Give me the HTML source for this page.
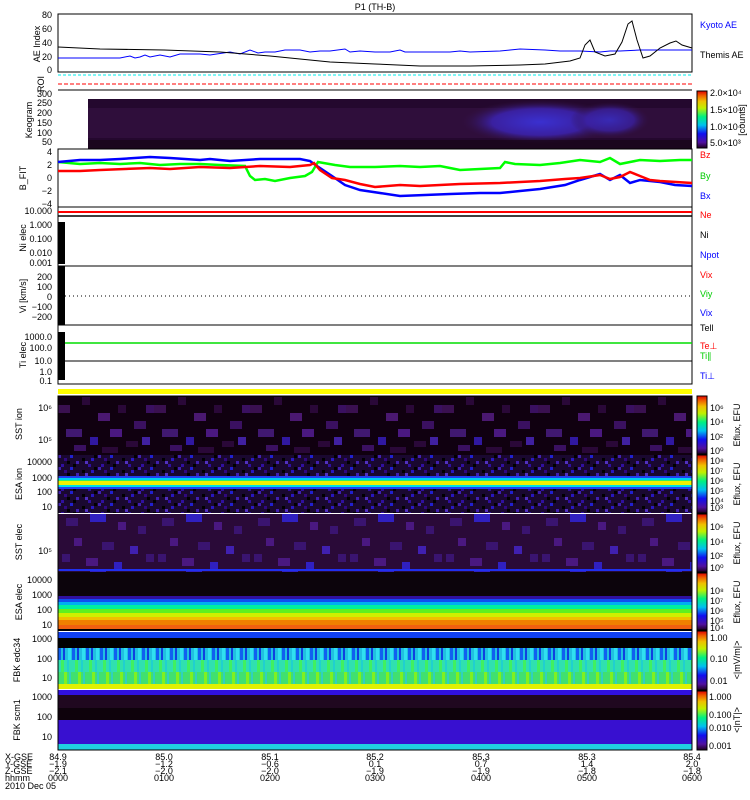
<!DOCTYPE html>
<html><head><meta charset="utf-8"><style>
html,body{margin:0;padding:0;background:#fff;width:750px;height:800px;overflow:hidden}
svg{display:block}
text{font-family:"Liberation Sans",sans-serif;font-size:9px}
</style></head><body>
<svg width="750" height="800" viewBox="0 0 750 800" xmlns="http://www.w3.org/2000/svg">
<defs>
<linearGradient id="cb" x1="0" y1="1" x2="0" y2="0">
<stop offset="0" stop-color="#200020"/><stop offset="0.1" stop-color="#5010a0"/><stop offset="0.25" stop-color="#1010f0"/><stop offset="0.4" stop-color="#00c0f0"/><stop offset="0.55" stop-color="#00f080"/><stop offset="0.7" stop-color="#c0f000"/><stop offset="0.82" stop-color="#f0c000"/><stop offset="0.92" stop-color="#f06000"/><stop offset="1" stop-color="#e00000"/>
</linearGradient>
<radialGradient id="kg" cx="0.5" cy="0.5" r="0.5">
<stop offset="0" stop-color="#3a30d0"/><stop offset="0.6" stop-color="#3a20a0"/><stop offset="1" stop-color="#32103e" stop-opacity="0"/>
</radialGradient>
<pattern id="sst1" width="96" height="58" patternUnits="userSpaceOnUse" x="58" y="397">
<rect width="96" height="58" fill="#100010"/>
<rect x="0" y="8" width="12" height="8" fill="#3a1050"/><rect x="24" y="0" width="8" height="8" fill="#2a0838"/><rect x="40" y="16" width="12" height="8" fill="#4a1870"/><rect x="60" y="8" width="8" height="8" fill="#2a0838"/><rect x="76" y="24" width="12" height="8" fill="#3a1060"/><rect x="8" y="32" width="16" height="8" fill="#401870"/><rect x="32" y="40" width="8" height="8" fill="#3018a0"/><rect x="52" y="32" width="12" height="8" fill="#4a1880"/><rect x="68" y="44" width="12" height="6" fill="#2a0838"/><rect x="84" y="40" width="8" height="8" fill="#4020a0"/><rect x="16" y="48" width="12" height="6" fill="#3a1060"/><rect x="44" y="50" width="16" height="6" fill="#2a0838"/><rect x="88" y="8" width="8" height="8" fill="#3a1060"/>
</pattern>
<pattern id="esan" width="40" height="12" patternUnits="userSpaceOnUse" x="58" y="455">
<rect width="40" height="12" fill="#1a0830"/>
<rect x="0" y="0" width="3" height="3" fill="#4020b0"/><rect x="6" y="3" width="3" height="3" fill="#300880"/><rect x="12" y="0" width="3" height="3" fill="#2020d0"/><rect x="18" y="6" width="3" height="3" fill="#4020b0"/><rect x="24" y="3" width="3" height="3" fill="#000"/><rect x="30" y="9" width="3" height="3" fill="#3010a0"/><rect x="36" y="0" width="3" height="3" fill="#000"/><rect x="3" y="9" width="3" height="3" fill="#3010a0"/><rect x="15" y="9" width="3" height="3" fill="#000"/><rect x="27" y="6" width="3" height="3" fill="#5030c0"/><rect x="9" y="6" width="3" height="3" fill="#000"/><rect x="33" y="3" width="3" height="3" fill="#2818c0"/>
</pattern>
<pattern id="sst2" width="96" height="56" patternUnits="userSpaceOnUse" x="58" y="514">
<rect width="96" height="56" fill="#2a0a38"/>
<rect x="8" y="4" width="12" height="8" fill="#3a1470"/><rect x="32" y="0" width="16" height="8" fill="#3020c0"/><rect x="60" y="8" width="8" height="8" fill="#4a1880"/><rect x="80" y="12" width="8" height="8" fill="#3a1470"/><rect x="16" y="24" width="8" height="8" fill="#4a1880"/><rect x="44" y="28" width="12" height="8" fill="#3a1470"/><rect x="72" y="32" width="8" height="8" fill="#4020b0"/><rect x="4" y="40" width="8" height="8" fill="#3a1470"/><rect x="28" y="44" width="12" height="8" fill="#4a1880"/><rect x="88" y="40" width="8" height="8" fill="#3a1470"/><rect x="56" y="48" width="8" height="8" fill="#3020c0"/>
</pattern>
<pattern id="fbk" width="14" height="60" patternUnits="userSpaceOnUse" x="58" y="630">
<rect width="14" height="60" fill="#20c0e0"/>
<rect x="0" y="18" width="3" height="12" fill="#1060f0"/><rect x="5" y="18" width="2" height="12" fill="#1040e0"/><rect x="10" y="18" width="3" height="12" fill="#30e0f0"/>
<rect x="0" y="30" width="14" height="12" fill="#30e0b0"/><rect x="3" y="30" width="3" height="12" fill="#40f060"/><rect x="9" y="30" width="2" height="12" fill="#20d0d0"/>
<rect x="0" y="42" width="14" height="13" fill="#40e070"/><rect x="6" y="42" width="3" height="13" fill="#80f020"/><rect x="11" y="42" width="2" height="13" fill="#30d0c0"/>
</pattern>
</defs>

<text x="375" y="10" text-anchor="middle" font-size="10">P1 (TH-B)</text>

<!-- AE panel -->
<rect x="58" y="14" width="634" height="58" fill="none" stroke="#000"/>
<polyline fill="none" stroke="#00f" points="58,58 80,58 100,58 120,58 130,56 135,58 140,57 145,55 150,57 160,55 170,57 180,54 200,54 210,55 230,52 240,54 250,50 258,53 265,52 275,52 285,50 300,50 310,52 320,51 330,51 345,49 350,52 360,51 375,52 390,52 400,50 405,52 430,52 450,52 460,51 470,52 500,51 510,50 520,49 545,50 560,51 580,51 600,52 610,51 620,51 640,50 660,50 692,50"/>
<polyline fill="none" stroke="#000" points="58,47 100,49 164,50 220,52 270,56 330,62 375,64 420,66 470,66 520,65 545,64 570,61 580,58 585,45 590,40 595,52 605,56 615,54 622,42 628,24 632,21 637,40 643,58 650,56 660,48 670,43 676,41 682,45 692,48"/>
<text x="52" y="18" text-anchor="end">80</text><text x="52" y="32" text-anchor="end">60</text><text x="52" y="46" text-anchor="end">40</text><text x="52" y="60" text-anchor="end">20</text><text x="52" y="73" text-anchor="end">0</text>
<text x="40" y="44" text-anchor="middle" transform="rotate(-90 40 44)">AE Index</text>
<text x="700" y="28" fill="#00f">Kyoto AE</text><text x="700" y="58">Themis AE</text>
<!-- ROI -->
<line x1="58" y1="75" x2="692" y2="75" stroke="#0ee" stroke-dasharray="3,2"/>
<line x1="58" y1="84" x2="692" y2="84" stroke="#f00" stroke-dasharray="4,2"/>
<text x="44" y="84" text-anchor="middle" transform="rotate(-90 44 84)">ROI</text>
<line x1="58" y1="90" x2="692" y2="90" stroke="#000"/>
<!-- keogram -->
<rect x="88" y="99" width="604" height="50" fill="#24082e"/>
<rect x="88" y="108" width="604" height="30" fill="#32103e" opacity="0.8"/>
<ellipse cx="540" cy="122" rx="80" ry="22" fill="url(#kg)"/>
<ellipse cx="610" cy="120" rx="40" ry="18" fill="url(#kg)" opacity="0.8"/>
<rect x="88" y="140" width="604" height="9" fill="#180618" opacity="0.7"/>
<text x="52" y="97" text-anchor="end">300</text><text x="52" y="106" text-anchor="end">250</text><text x="52" y="116" text-anchor="end">200</text><text x="52" y="126" text-anchor="end">150</text><text x="52" y="136" text-anchor="end">100</text><text x="52" y="145" text-anchor="end">50</text>
<text x="32" y="120" text-anchor="middle" transform="rotate(-90 32 120)">Keogram</text>
<rect x="697" y="91" width="10" height="57" fill="url(#cb)" stroke="#000"/>
<g font-size="8"><text x="710" y="96">2.0×10⁴</text><text x="710" y="113">1.5×10⁴</text><text x="710" y="130">1.0×10⁴</text><text x="710" y="146">5.0×10³</text></g>
<!-- B panel -->
<rect x="58" y="149" width="634" height="58" fill="none" stroke="#000"/>
<polyline fill="none" stroke="#0f0" stroke-width="2.5" points="58,162 80,164 100,163 120,164 140,163 160,165 180,164 200,164 220,165 245,166 250,176 255,180 265,179 275,181 290,178 305,176 312,172 318,162 335,165 350,167 375,167 400,166 420,167 440,166 450,168 460,170 480,169 500,168 505,162 515,164 540,165 560,163 580,160 600,162 610,158 620,164 640,160 660,161 680,160 692,160"/>
<polyline fill="none" stroke="#00f" stroke-width="2.5" points="58,162 80,160 100,160 120,159 150,157 170,158 200,160 210,159 230,161 260,159 300,159 310,161 314,164 320,168 332,176 345,185 360,190 380,193 400,196 450,194 480,193 500,193 520,191 540,189 565,185 580,180 600,174 610,180 620,175 630,183 640,180 660,182 675,185 692,186"/>
<polyline fill="none" stroke="#f00" stroke-width="2.5" points="58,171 80,171 100,170 150,168 170,169 200,167 230,168 260,166 290,167 310,165 314,163 320,170 332,178 345,180 360,184 375,187 400,185 420,186 460,184 500,183 520,182 540,181 565,179 580,178 600,175 610,179 620,177 630,172 640,176 650,180 660,181 692,183"/>
<text x="52" y="155" text-anchor="end">4</text><text x="52" y="168" text-anchor="end">2</text><text x="52" y="181" text-anchor="end">0</text><text x="52" y="194" text-anchor="end">−2</text><text x="52" y="207" text-anchor="end">−4</text>
<text x="26" y="178" text-anchor="middle" transform="rotate(-90 26 178)">B_FIT</text>
<text x="700" y="158" fill="#f00">Bz</text><text x="700" y="179" fill="#0c0">By</text><text x="700" y="199" fill="#00f">Bx</text>
<!-- density -->
<rect x="58" y="207" width="634" height="59" fill="none" stroke="#000"/>
<line x1="58" y1="212" x2="692" y2="212" stroke="#f00" stroke-width="2"/>
<line x1="58" y1="216" x2="692" y2="216" stroke="#000" stroke-width="1.5"/>
<rect x="58" y="222" width="7" height="42" fill="#000"/>
<text x="52" y="214" text-anchor="end">10.000</text><text x="52" y="228" text-anchor="end">1.000</text><text x="52" y="242" text-anchor="end">0.100</text><text x="52" y="256" text-anchor="end">0.010</text><text x="52" y="266" text-anchor="end">0.001</text>
<text x="26" y="238" text-anchor="middle" transform="rotate(-90 26 238)">Ni elec</text>
<text x="700" y="218" fill="#f00">Ne</text><text x="700" y="238">Ni</text><text x="700" y="258" fill="#00f">Npot</text>
<!-- V -->
<rect x="58" y="266" width="634" height="59" fill="none" stroke="#000"/>
<rect x="58" y="266" width="7" height="59" fill="#000"/>
<line x1="65" y1="296" x2="692" y2="296" stroke="#000" stroke-dasharray="1,3"/>
<text x="52" y="280" text-anchor="end">200</text><text x="52" y="290" text-anchor="end">100</text><text x="52" y="300" text-anchor="end">0</text><text x="52" y="310" text-anchor="end">−100</text><text x="52" y="320" text-anchor="end">−200</text>
<text x="26" y="296" text-anchor="middle" transform="rotate(-90 26 296)">Vi [km/s]</text>
<text x="700" y="278" fill="#f00">Vix</text><text x="700" y="297" fill="#0c0">Viy</text><text x="700" y="316" fill="#00f">Vix</text>
<!-- T -->
<rect x="58" y="325" width="634" height="59" fill="none" stroke="#000"/>
<line x1="58" y1="343" x2="692" y2="343" stroke="#0d0" stroke-width="1.5"/>
<line x1="58" y1="361" x2="692" y2="361" stroke="#000"/>
<rect x="58" y="332" width="7" height="48" fill="#000"/>
<text x="52" y="340" text-anchor="end">1000.0</text><text x="52" y="351" text-anchor="end">100.0</text><text x="52" y="364" text-anchor="end">10.0</text><text x="52" y="375" text-anchor="end">1.0</text><text x="52" y="384" text-anchor="end">0.1</text>
<text x="26" y="355" text-anchor="middle" transform="rotate(-90 26 355)">Ti elec</text>
<text x="700" y="331">Tell</text><text x="700" y="349" fill="#f00">Te⊥</text><text x="700" y="359" fill="#0c0">Ti∥</text><text x="700" y="379" fill="#00f">Ti⊥</text>
<!-- yellow bar -->
<rect x="58" y="389" width="634" height="5" fill="#ff0"/>
<!-- SST ion -->
<rect x="58" y="396" width="634" height="59" fill="url(#sst1)"/>
<!-- ESA ion -->
<rect x="58" y="455" width="634" height="58" fill="url(#esan)"/>
<rect x="58" y="476" width="634" height="2" fill="#2040f0"/>
<rect x="58" y="478" width="634" height="2" fill="#00d0f0"/>
<rect x="58" y="480" width="634" height="1" fill="#30f060"/>
<rect x="58" y="481" width="634" height="4" fill="#f0f000"/>
<rect x="58" y="485" width="634" height="2" fill="#00e0e0"/>
<rect x="58" y="487" width="634" height="2" fill="#2040f0"/>
<!-- SST elec -->
<rect x="58" y="514" width="634" height="58" fill="url(#sst2)"/>
<rect x="58" y="569" width="634" height="2" fill="#2030f0"/>
<!-- ESA elec -->
<rect x="58" y="572" width="634" height="58" fill="#0c040c"/>
<rect x="58" y="596" width="634" height="3" fill="#3010a0"/>
<rect x="58" y="599" width="634" height="3" fill="#1050f0"/>
<rect x="58" y="602" width="634" height="3" fill="#00b0f0"/>
<rect x="58" y="605" width="634" height="4" fill="#00f0a0"/>
<rect x="58" y="609" width="634" height="4" fill="#60f020"/>
<rect x="58" y="613" width="634" height="4" fill="#d0f000"/>
<rect x="58" y="617" width="634" height="3" fill="#f0c000"/>
<rect x="58" y="620" width="634" height="5" fill="#f08000"/>
<rect x="58" y="625" width="634" height="4" fill="#f06010"/>
<rect x="58" y="629" width="634" height="2" fill="#000"/>
<!-- FBK edc -->
<rect x="58" y="632" width="634" height="6" fill="#1040f0"/>
<rect x="58" y="638" width="634" height="10" fill="#000"/>
<rect x="58" y="648" width="634" height="37" fill="url(#fbk)"/>
<rect x="58" y="684" width="634" height="5" fill="#e0f000"/>
<!-- FBK scm -->
<rect x="58" y="690" width="634" height="5" fill="#3010e0"/>
<rect x="58" y="695" width="634" height="13" fill="#200820"/>
<rect x="58" y="708" width="634" height="12" fill="#0e020c"/>
<rect x="58" y="720" width="634" height="24" fill="#3810d0"/>
<rect x="58" y="744" width="634" height="6" fill="#20d0e0"/>
<rect x="58" y="396" width="634" height="354" fill="none" stroke="#000"/>
<!-- spectra labels -->
<text x="52" y="411" text-anchor="end">10⁶</text><text x="52" y="443" text-anchor="end">10⁵</text>
<text x="52" y="465" text-anchor="end">10000</text><text x="52" y="481" text-anchor="end">1000</text><text x="52" y="495" text-anchor="end">100</text><text x="52" y="510" text-anchor="end">10</text>
<text x="52" y="554" text-anchor="end">10⁵</text>
<text x="52" y="583" text-anchor="end">10000</text><text x="52" y="598" text-anchor="end">1000</text><text x="52" y="613" text-anchor="end">100</text><text x="52" y="628" text-anchor="end">10</text>
<text x="52" y="642" text-anchor="end">1000</text><text x="52" y="662" text-anchor="end">100</text><text x="52" y="681" text-anchor="end">10</text>
<text x="52" y="700" text-anchor="end">1000</text><text x="52" y="720" text-anchor="end">100</text><text x="52" y="740" text-anchor="end">10</text>
<text x="22" y="424" text-anchor="middle" transform="rotate(-90 22 424)">SST ion</text>
<text x="22" y="484" text-anchor="middle" transform="rotate(-90 22 484)">ESA ion</text>
<text x="22" y="542" text-anchor="middle" transform="rotate(-90 22 542)">SST elec</text>
<text x="22" y="602" text-anchor="middle" transform="rotate(-90 22 602)">ESA elec</text>
<text x="20" y="660" text-anchor="middle" transform="rotate(-90 20 660)">FBK edc34</text>
<text x="20" y="720" text-anchor="middle" transform="rotate(-90 20 720)">FBK scm1</text>
<!-- colorbars -->
<rect x="697" y="396" width="10" height="58" fill="url(#cb)" stroke="#000"/>
<rect x="697" y="455" width="10" height="58" fill="url(#cb)" stroke="#000"/>
<rect x="697" y="514" width="10" height="58" fill="url(#cb)" stroke="#000"/>
<rect x="697" y="573" width="10" height="57" fill="url(#cb)" stroke="#000"/>
<rect x="697" y="631" width="10" height="59" fill="url(#cb)" stroke="#000"/>
<rect x="697" y="691" width="10" height="59" fill="url(#cb)" stroke="#000"/>
<g font-size="8">
<text x="710" y="411">10⁶</text><text x="710" y="425">10⁴</text><text x="710" y="440">10²</text><text x="710" y="454">10⁰</text>
<text x="710" y="464">10⁸</text><text x="710" y="474">10⁷</text><text x="710" y="484">10⁶</text><text x="710" y="494">10⁵</text><text x="710" y="504">10⁴</text><text x="710" y="511">10³</text>
<text x="710" y="530">10⁶</text><text x="710" y="545">10⁴</text><text x="710" y="559">10²</text><text x="710" y="571">10⁰</text>
<text x="710" y="594">10⁸</text><text x="710" y="604">10⁷</text><text x="710" y="614">10⁶</text><text x="710" y="624">10⁵</text><text x="710" y="631">10⁴</text>
<text x="710" y="641">1.00</text><text x="710" y="662">0.10</text><text x="710" y="684">0.01</text>
<text x="709" y="700">1.000</text><text x="709" y="718">0.100</text><text x="709" y="731">0.010</text><text x="709" y="749">0.001</text>
</g>
<g font-size="8">
<text x="740" y="425" text-anchor="middle" transform="rotate(-90 740 425)">Eflux, EFU</text>
<text x="740" y="484" text-anchor="middle" transform="rotate(-90 740 484)">Eflux, EFU</text>
<text x="740" y="543" text-anchor="middle" transform="rotate(-90 740 543)">Eflux, EFU</text>
<text x="740" y="602" text-anchor="middle" transform="rotate(-90 740 602)">Eflux, EFU</text>
<text x="740" y="660" text-anchor="middle" transform="rotate(-90 740 660)">&lt;|mV/m|&gt;</text>
<text x="740" y="720" text-anchor="middle" transform="rotate(-90 740 720)">&lt;|nT|&gt;</text>
<text x="745" y="120" text-anchor="middle" transform="rotate(-90 745 120)">[counts]</text>
</g>
<!-- bottom labels -->
<g font-size="8">
<text x="5" y="760">X-GSE</text><text x="5" y="767">Y-GSE</text><text x="5" y="774">Z-GSE</text><text x="5" y="781">hhmm</text><text x="5" y="789">2010 Dec 05</text>
<g text-anchor="middle">
<text x="58" y="760">84.9</text><text x="58" y="767">−1.9</text><text x="58" y="774">−2.1</text><text x="58" y="781">0000</text>
<text x="164" y="760">85.0</text><text x="164" y="767">−1.2</text><text x="164" y="774">−2.0</text><text x="164" y="781">0100</text>
<text x="270" y="760">85.1</text><text x="270" y="767">−0.6</text><text x="270" y="774">−2.0</text><text x="270" y="781">0200</text>
<text x="375" y="760">85.2</text><text x="375" y="767">0.1</text><text x="375" y="774">−1.9</text><text x="375" y="781">0300</text>
<text x="481" y="760">85.3</text><text x="481" y="767">0.7</text><text x="481" y="774">−1.9</text><text x="481" y="781">0400</text>
<text x="587" y="760">85.3</text><text x="587" y="767">1.4</text><text x="587" y="774">−1.8</text><text x="587" y="781">0500</text>
<text x="692" y="760">85.4</text><text x="692" y="767">2.0</text><text x="692" y="774">−1.8</text><text x="692" y="781">0600</text>
</g></g>
</svg>
</body></html>
